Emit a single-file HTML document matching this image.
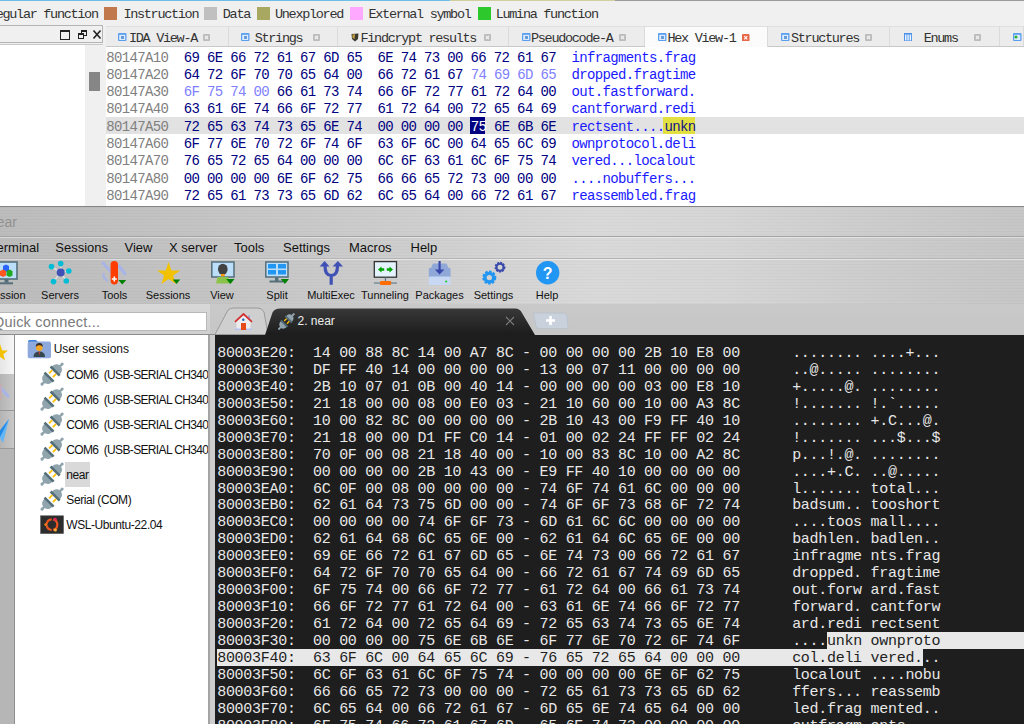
<!DOCTYPE html><html><head><meta charset="utf-8"><style>
*{margin:0;padding:0;box-sizing:border-box}
html,body{width:1024px;height:724px;overflow:hidden;background:#f0f0f0;position:relative}
.ab{position:absolute}
.mono{font-family:"Liberation Mono",monospace}
.sans{font-family:"Liberation Sans",sans-serif}
.leg{position:absolute;top:5.5px;font-family:"Liberation Mono",monospace;font-size:13.5px;letter-spacing:-1.3px;color:#333;line-height:18px;white-space:pre}
.sq{position:absolute;top:7px;width:13px;height:13px}
.tab{position:absolute;top:29px;height:20px;font-family:"Liberation Mono",monospace;font-size:13.5px;letter-spacing:-1.3px;color:#333;line-height:20px;white-space:pre}
.tx{position:absolute;top:34px;width:7px;height:7px;border:1px solid #c4c4c4;background:#d8d8d8}
.ic{position:absolute;top:33px;width:8px;height:8px;background:#a8c8f0;border:1px solid #3c78c8}
.hx{position:absolute;left:106.3px;font-family:"Liberation Mono",monospace;font-size:14px;letter-spacing:-0.65px;line-height:17.33px;white-space:pre;color:#000080}
.ad{color:#808080}.lt{color:#8080ff}.as{color:#1a1aff}
.term{position:absolute;left:217.2px;top:346px;font-family:"Liberation Mono",monospace;font-size:15px;letter-spacing:-0.29px;line-height:16.93px;white-space:pre;color:#e8e8e8}
.sel{background:#e8e8e8;color:#1e1e1e}
.menu{position:absolute;top:240px;font-family:"Liberation Sans",sans-serif;font-size:13px;color:#111;line-height:16px;white-space:pre}
.tl{position:absolute;top:289px;font-family:"Liberation Sans",sans-serif;font-size:11px;color:#111;line-height:13px;white-space:pre;text-align:center}
.ti{position:absolute;font-family:"Liberation Sans",sans-serif;font-size:12px;letter-spacing:-0.42px;color:#111;line-height:14px;white-space:pre}
</style></head><body>

<div class="ab" style="left:0;top:0;width:450px;height:1px;background:#6cbfe8"></div>
<div class="ab" style="left:450px;top:0;width:165px;height:1px;background:#cfcfa0"></div>
<div class="ab" style="left:615px;top:0;width:409px;height:1px;background:#9a9a9a"></div>
<div class="leg" style="left:-11.1px">Regular function</div>
<div class="leg" style="left:123.4px">Instruction</div>
<div class="leg" style="left:222.8px">Data</div>
<div class="leg" style="left:275px">Unexplored</div>
<div class="leg" style="left:368.5px">External symbol</div>
<div class="leg" style="left:495.7px">Lumina function</div>
<div class="sq" style="left:104px;background:#c0784c"></div>
<div class="sq" style="left:204px;background:#c0c0c0"></div>
<div class="sq" style="left:257px;background:#a8a860"></div>
<div class="sq" style="left:350.2px;background:#ffa8ff"></div>
<div class="sq" style="left:477.5px;background:#2cc82c"></div>
<div class="ab" style="left:0;top:25px;width:103px;height:18px;border:1px solid #b4b4b4;border-left:none;background:#f0f0f0"></div>
<div class="ab" style="left:0;top:44px;width:103px;height:1px;background:#c8c8c8"></div>
<div class="ab" style="left:60px;top:30px;width:10px;height:10px;border:1px solid #222;border-top:2px solid #222"></div>
<div class="ab" style="left:80.5px;top:30px;width:6px;height:6px;border:1px solid #222;border-top:2px solid #222"></div>
<div class="ab" style="left:78px;top:33px;width:6px;height:6px;border:1px solid #222;border-top:2px solid #222;background:#f0f0f0"></div>
<svg class="ab" style="left:92px;top:29px" width="10" height="11"><path d="M1.5 1.5L8.5 9.5M8.5 1.5L1.5 9.5" stroke="#222" stroke-width="1.6"/></svg>
<div class="ab" style="left:0;top:45px;width:85px;height:161px;background:#fff"></div>
<div class="ab" style="left:85px;top:45px;width:21px;height:161px;background:#f0f0f0"></div>
<div class="ab" style="left:88.6px;top:72px;width:11px;height:19px;background:#868686"></div>
<div class="ab" style="left:106px;top:46px;width:918px;height:1px;background:#c8c8c8"></div>
<div class="ab" style="left:106px;top:26px;width:123px;height:20px;background:#ececec;border-right:1px solid #dadada;border-top:1px solid #e0e0e0"></div>
<div class="ab" style="left:229px;top:26px;width:109px;height:20px;background:#ececec;border-right:1px solid #dadada;border-top:1px solid #e0e0e0"></div>
<div class="ab" style="left:338px;top:26px;width:171px;height:20px;background:#ececec;border-right:1px solid #dadada;border-top:1px solid #e0e0e0"></div>
<div class="ab" style="left:509px;top:26px;width:136px;height:20px;background:#ececec;border-right:1px solid #dadada;border-top:1px solid #e0e0e0"></div>
<div class="ab" style="left:645px;top:26px;width:123px;height:21px;background:#fbfbfb;border-right:1px solid #dadada;border-top:1px solid #e0e0e0"></div>
<div class="ab" style="left:768px;top:26px;width:122px;height:20px;background:#ececec;border-right:1px solid #dadada;border-top:1px solid #e0e0e0"></div>
<div class="ab" style="left:890px;top:26px;width:110px;height:20px;background:#ececec;border-right:1px solid #dadada;border-top:1px solid #e0e0e0"></div>
<div class="ab" style="left:1000px;top:26px;width:24px;height:20px;background:#ececec;border-right:1px solid #dadada;border-top:1px solid #e0e0e0"></div>
<div class="tab" style="left:129px">IDA View-A</div>
<svg class="ab" style="left:118px;top:33px" width="9" height="8"><rect x="0" y="0" width="8.5" height="8" rx="1" fill="#5a9ef0"/><rect x="1.2" y="1.8" width="6" height="5.2" fill="#dcecff"/><rect x="3" y="3" width="3" height="3" fill="#6a9ad8"/></svg>
<svg class="ab" style="left:203px;top:34px" width="7" height="7"><rect x="0" y="0" width="7" height="7" rx="1" fill="#bcbcbc"/><path d="M2 2L5 5M5 2L2 5" stroke="#f4f4f4" stroke-width="1.1"/></svg>
<div class="tab" style="left:254.7px">Strings</div>
<svg class="ab" style="left:241px;top:33px" width="9" height="8"><rect x="0" y="0" width="8.5" height="8" rx="1" fill="#5a9ef0"/><rect x="1.2" y="1.8" width="6" height="5.2" fill="#dcecff"/><rect x="3" y="3" width="3" height="3" fill="#6a9ad8"/></svg>
<svg class="ab" style="left:313px;top:34px" width="7" height="7"><rect x="0" y="0" width="7" height="7" rx="1" fill="#bcbcbc"/><path d="M2 2L5 5M5 2L2 5" stroke="#f4f4f4" stroke-width="1.1"/></svg>
<div class="tab" style="left:360.5px">Findcrypt results</div>
<svg class="ab" style="left:351.4px;top:32.5px" width="8" height="9"><path d="M0.5 1 L7.5 0.5 L7 6 L4 8.5 L1 6Z" fill="#3a3a30"/><path d="M1.5 1.5 L4 1.2 L3.5 6 L1.5 5Z" fill="#c8a040"/></svg>
<svg class="ab" style="left:484px;top:34px" width="7" height="7"><rect x="0" y="0" width="7" height="7" rx="1" fill="#bcbcbc"/><path d="M2 2L5 5M5 2L2 5" stroke="#f4f4f4" stroke-width="1.1"/></svg>
<div class="tab" style="left:531px">Pseudocode-A</div>
<svg class="ab" style="left:521.6px;top:33px" width="9" height="8"><rect x="0" y="0" width="8.5" height="8" rx="1" fill="#5a9ef0"/><rect x="1.2" y="1.8" width="6" height="5.2" fill="#dcecff"/><rect x="3" y="3" width="3" height="3" fill="#6a9ad8"/></svg>
<svg class="ab" style="left:619.3px;top:34px" width="7" height="7"><rect x="0" y="0" width="7" height="7" rx="1" fill="#bcbcbc"/><path d="M2 2L5 5M5 2L2 5" stroke="#f4f4f4" stroke-width="1.1"/></svg>
<div class="tab" style="left:667.5px">Hex View-1</div>
<svg class="ab" style="left:658px;top:33px" width="9" height="8"><rect x="0" y="0" width="8.5" height="8" rx="1" fill="#5a9ef0"/><rect x="1.2" y="1.8" width="6" height="5.2" fill="#dcecff"/><rect x="3" y="3" width="3" height="3" fill="#6a9ad8"/></svg>
<svg class="ab" style="left:742.4px;top:33.5px" width="7.5" height="7.5"><rect x="0" y="0" width="7.5" height="7.5" rx="1" fill="#e8684a"/><path d="M2.2 2.2L5.3 5.3M5.3 2.2L2.2 5.3" stroke="#fff" stroke-width="1.1"/></svg>
<div class="tab" style="left:791px">Structures</div>
<svg class="ab" style="left:781px;top:33px" width="9" height="8"><rect x="0" y="0" width="8.5" height="8" rx="1" fill="#5a9ef0"/><rect x="1.2" y="1.8" width="6" height="5.2" fill="#dcecff"/><rect x="3" y="3" width="3" height="3" fill="#6a9ad8"/></svg>
<svg class="ab" style="left:865px;top:34px" width="7" height="7"><rect x="0" y="0" width="7" height="7" rx="1" fill="#bcbcbc"/><path d="M2 2L5 5M5 2L2 5" stroke="#f4f4f4" stroke-width="1.1"/></svg>
<div class="tab" style="left:923.7px">Enums</div>
<svg class="ab" style="left:904px;top:33px" width="8" height="8"><rect x="0" y="0" width="8" height="8" fill="#4a90e8"/><rect x="1" y="1.5" width="1.5" height="6" fill="#e8f4ff"/><rect x="3.3" y="1.5" width="1.5" height="6" fill="#e8f4ff"/><rect x="5.6" y="1.5" width="1.5" height="6" fill="#e8f4ff"/></svg>
<svg class="ab" style="left:974.4px;top:34px" width="7" height="7"><rect x="0" y="0" width="7" height="7" rx="1" fill="#bcbcbc"/><path d="M2 2L5 5M5 2L2 5" stroke="#f4f4f4" stroke-width="1.1"/></svg>
<svg class="ab" style="left:1013px;top:33px" width="9" height="8"><rect x="0" y="0" width="8.5" height="8" rx="1" fill="#5a9ef0"/><rect x="1.2" y="1.8" width="6" height="5.2" fill="#dcecff"/><circle cx="3" cy="4" r="1.6" fill="#30b030"/></svg>
<div class="ab" style="left:106px;top:47px;width:918px;height:159px;background:#fff"></div>
<div class="ab" style="left:106px;top:117px;width:918px;height:17.4px;background:#e2e2e2"></div>
<div class="ab" style="left:470px;top:117.2px;width:15.4px;height:17px;background:#000080"></div>
<div class="ab" style="left:663.3px;top:117px;width:31.4px;height:17.2px;background:#e2e040"></div>
<div class="hx" style="top:49.5px"><span class="ad">80147A10</span>  69 6E 66 72 61 67 6D 65  6E 74 73 00 66 72 61 67  <span class="as">infragments.frag</span>
<span class="ad">80147A20</span>  64 72 6F 70 70 65 64 00  66 72 61 67 <span class="lt">74 69 6D 65</span>  <span class="as">dropped.fragtime</span>
<span class="ad">80147A30</span>  <span class="lt">6F 75 74 00</span> 66 61 73 74  66 6F 72 77 61 72 64 00  <span class="as">out.fastforward.</span>
<span class="ad">80147A40</span>  63 61 6E 74 66 6F 72 77  61 72 64 00 72 65 64 69  <span class="as">cantforward.redi</span>
<span class="ad">80147A50</span>  72 65 63 74 73 65 6E 74  00 00 00 00 <span style="color:#fff">75</span> 6E 6B 6E  <span class="as">rectsent....<span style="color:#10108a">unkn</span></span>
<span class="ad">80147A60</span>  6F 77 6E 70 72 6F 74 6F  63 6F 6C 00 64 65 6C 69  <span class="as">ownprotocol.deli</span>
<span class="ad">80147A70</span>  76 65 72 65 64 00 00 00  6C 6F 63 61 6C 6F 75 74  <span class="as">vered...localout</span>
<span class="ad">80147A80</span>  00 00 00 00 6E 6F 62 75  66 66 65 72 73 00 00 00  <span class="as">....nobuffers...</span>
<span class="ad">80147A90</span>  72 65 61 73 73 65 6D 62  6C 65 64 00 66 72 61 67  <span class="as">reassembled.frag</span></div>
<div class="ab" style="left:0;top:205.5px;width:1024px;height:1.5px;background:#858585"></div>
<div class="ab" style="left:0;top:207px;width:1024px;height:30px;background:linear-gradient(90deg,#bcbcbc 0%,#c4c4c4 20%,#cecece 40%,#d9d9d9 58%,#d6d6d6 70%,#cdcdcd 85%,#c6c6c6 100%)"></div>
<div class="ab sans" style="left:-11px;top:214px;font-size:14px;color:#939393;line-height:16px">near</div>
<div class="ab" style="left:0;top:237px;width:1024px;height:22px;background:linear-gradient(90deg,#bcbcbc 0%,#c4c4c4 20%,#cecece 40%,#d9d9d9 58%,#d6d6d6 70%,#cdcdcd 85%,#c6c6c6 100%)"></div>
<div class="menu" style="left:-10px">Terminal</div>
<div class="menu" style="left:55.3px">Sessions</div>
<div class="menu" style="left:124.5px">View</div>
<div class="menu" style="left:169px">X server</div>
<div class="menu" style="left:234px">Tools</div>
<div class="menu" style="left:283px">Settings</div>
<div class="menu" style="left:349px">Macros</div>
<div class="menu" style="left:410.5px">Help</div>
<div class="ab" style="left:0;top:259px;width:1024px;height:45px;background:linear-gradient(90deg,#bcbcbc 0%,#c4c4c4 20%,#cecece 40%,#d9d9d9 58%,#d6d6d6 70%,#cdcdcd 85%,#c6c6c6 100%)"></div>
<div class="ab" style="left:0;top:303.5px;width:1024px;height:31px;background:linear-gradient(#c9c9c9,#c6c6c6)"></div>
<div class="ab" style="left:0;top:304px;width:210px;height:30px;background:linear-gradient(#d8d8d8,#d0d0d0)"></div>
<div class="ab" style="left:0;top:207px;width:1024px;height:97px;background:repeating-linear-gradient(180deg,rgba(0,0,0,0.018) 0 1px,rgba(255,255,255,0) 1px 3px)"></div>
<div class="ab" style="left:0;top:236px;width:1024px;height:1px;background:#a4a4a4"></div>
<div class="ab" style="left:0;top:237px;width:1024px;height:1px;background:rgba(255,255,255,0.45)"></div>
<div class="ab" style="left:0;top:258px;width:1024px;height:1px;background:#b4b4b4"></div>
<div class="ab" style="left:0;top:259px;width:1024px;height:1px;background:rgba(255,255,255,0.45)"></div>
<div class="tl" style="left:-34px;width:80px">Session</div>
<div class="tl" style="left:20px;width:80px">Servers</div>
<div class="tl" style="left:74.5px;width:80px">Tools</div>
<div class="tl" style="left:128px;width:80px">Sessions</div>
<div class="tl" style="left:182px;width:80px">View</div>
<div class="tl" style="left:237px;width:80px">Split</div>
<div class="tl" style="left:291px;width:80px">MultiExec</div>
<div class="tl" style="left:345px;width:80px">Tunneling</div>
<div class="tl" style="left:399.5px;width:80px">Packages</div>
<div class="tl" style="left:453.5px;width:80px">Settings</div>
<div class="tl" style="left:507px;width:80px">Help</div>
<svg class="ab" style="left:0;top:256px" width="580" height="34" viewBox="0 256 580 34">
<g>
<rect x="-6" y="262" width="23" height="17" fill="#bbdefb" stroke="#546e7a" stroke-width="1.6"/>
<rect x="4.5" y="279" width="4" height="3.5" fill="#546e7a"/><rect x="-4" y="282.3" width="17" height="2" fill="#546e7a"/>
<path d="M3 266 L6 264.5 L9 266 L9 270.5 L6 272 L3 270.5Z" fill="#2962ff"/>
<path d="M0 271 L3 269.5 L6 271 L6 275.5 L3 277 L0 275.5Z" fill="#ff5722"/>
<path d="M6.5 271 L9.5 269.5 L12.5 271 L12.5 275.5 L9.5 277 L6.5 275.5Z" fill="#1faa1f"/>
</g>
<g stroke="#e0e0e0" stroke-width="1.4">
<line x1="60.7" y1="272.4" x2="51.5" y2="266.6"/><line x1="60.7" y1="272.4" x2="60.7" y2="263.9"/><line x1="60.7" y1="272.4" x2="68.8" y2="271"/><line x1="60.7" y1="272.4" x2="53.5" y2="281.6"/><line x1="60.7" y1="272.4" x2="66.3" y2="281"/>
</g>
<g fill="#00bcd4"><circle cx="51.5" cy="266.6" r="2.8"/><circle cx="60.7" cy="263.6" r="2.8"/><circle cx="68.8" cy="271" r="2.8"/><circle cx="53.5" cy="281.6" r="2.8"/><circle cx="66.3" cy="281" r="2.8"/></g>
<circle cx="60.7" cy="272.4" r="4" fill="#3f51b5"/>
<g>
<path d="M103 263 L114 275" stroke="#a8b4e8" stroke-width="3" stroke-linecap="round"/>
<path d="M119 266 L125 274" stroke="#a8b4e8" stroke-width="3" stroke-linecap="round"/>
<path d="M104 273 Q102 278 108 281" stroke="#a8b4e8" stroke-width="2" fill="none"/>
<rect x="110.6" y="261" width="7.4" height="23.4" rx="3.7" fill="#ff3d00"/>
<path d="M114.3 276.5 V281.5 M111.8 279 H116.8" stroke="#fff" stroke-width="1.6"/>
<path d="M118.3 280 H126.2 L122.25 284.4Z" fill="#008000"/>
</g>
<g>
<path d="M168.6 262 L171.4 270.5 L180.2 270.5 L173.1 275.6 L175.8 284 L168.6 278.9 L161.4 284 L164.1 275.6 L157 270.5 L165.8 270.5Z" fill="#f2c200"/>
<path d="M172.8 279.5 H180.2 L176.5 284Z" fill="#008000"/>
</g>
<g>
<rect x="211.8" y="262" width="22.2" height="15" fill="#bbdefb" stroke="#546e7a" stroke-width="1.5"/>
<ellipse cx="222.8" cy="269.3" rx="4.8" ry="5.6" fill="#424242"/>
<rect x="221" y="274" width="3.6" height="2.4" fill="#ff9800"/>
<path d="M216 283.5 L217.5 277 H228 L230 283.5Z" fill="#8bc34a"/>
<path d="M226.2 279 H234.5 L230.35 284Z" fill="#008000"/>
</g>
<g>
<rect x="265.8" y="262" width="22.2" height="15" fill="#bbdefb" stroke="#546e7a" stroke-width="1.5"/>
<rect x="268" y="264" width="8" height="4.5" fill="#2196f3"/><rect x="278" y="264" width="8" height="4.5" fill="#2196f3"/>
<rect x="268" y="270" width="8" height="4.5" fill="#2196f3"/><rect x="278" y="270" width="8" height="4.5" fill="#2196f3"/>
<rect x="275" y="277.5" width="3.5" height="3.5" fill="#546e7a"/><rect x="269.5" y="280.5" width="14" height="2" fill="#546e7a"/>
<path d="M280.8 279 H289 L284.9 284Z" fill="#008000"/>
</g>
<g fill="#3f51b5">
<path d="M331.2 284.8 V275.5 M325 266 Q325 275.5 331.2 275.5 Q337.5 275.5 337.5 266" stroke="#3f51b5" stroke-width="3.2" fill="none"/>
<path d="M319.7 266.6 L324.6 261 L329.5 266.6Z"/><path d="M332.6 266.6 L337.9 261 L343 266.6Z"/>
</g>
<g>
<rect x="374.3" y="261.6" width="22.2" height="15.6" fill="#e3f2fd" stroke="#333" stroke-width="1.3"/>
<path d="M378 269.5 L381.5 266.5 V268.3 H384.2 V270.7 H381.5 V272.5Z M393 269.5 L389.5 266.5 V268.3 H386.8 V270.7 H389.5 V272.5Z" fill="#00a000"/>
<rect x="384.8" y="277.5" width="1.3" height="4" fill="#607d8b"/>
<rect x="374" y="282.3" width="23" height="1.5" fill="#78909c"/>
<rect x="380" y="281" width="11.2" height="4" rx="1" fill="#ff6d00"/>
</g>
<g>
<path d="M431 268 L433 263.5 H446.5 L448.5 268Z" fill="#8fa8d8"/>
<rect x="428.8" y="268" width="21.7" height="9.2" rx="1" fill="#8fa8d8"/>
<rect x="428.8" y="276.5" width="21.7" height="8.5" rx="1.5" fill="#c8d8f4"/>
<circle cx="446.2" cy="281.5" r="1.1" fill="#22cc22"/>
<path d="M439.6 261 V271" stroke="#3949ab" stroke-width="2.2"/>
<path d="M434.8 269.5 H444.4 L439.6 274.5Z" fill="#3949ab"/>
</g>
<g>
<circle cx="489.3" cy="277.6" r="5.4" fill="none" stroke="#2196f3" stroke-width="3.2" stroke-dasharray="2.3 1.2"/>
<circle cx="489.3" cy="277.6" r="4.3" fill="none" stroke="#2196f3" stroke-width="3.2"/>
<circle cx="500" cy="267.2" r="4.1" fill="none" stroke="#3949ab" stroke-width="2.6" stroke-dasharray="1.8 0.9"/>
<circle cx="500" cy="267.2" r="3.5" fill="none" stroke="#3949ab" stroke-width="2"/>
</g>
<g>
<circle cx="547.7" cy="272.8" r="11.7" fill="#2196f3"/>
<text x="547.7" y="278.6" text-anchor="middle" font-family="Liberation Sans" font-weight="bold" font-size="16" fill="#fff">?</text>
</g>
</svg>
<div class="ab" style="left:0;top:312px;width:207px;height:19px;background:#fff;border:1px solid #b8b8b8;border-left:none"></div>
<div class="ab sans" style="left:-7px;top:313.5px;font-size:14.5px;letter-spacing:0.2px;color:#7a7a7a;line-height:16px">Quick connect...</div>
<div class="ab" style="left:0;top:334px;width:215px;height:390px;background:#c0c0c0"></div>
<div class="ab" style="left:0;top:335px;width:15px;height:389px;background:#b6b6b6;border-right:1.5px solid #8e8e8e"></div>
<div class="ab" style="left:0;top:335px;width:13.5px;height:38.5px;background:linear-gradient(90deg,#e6e6e6,#f6f6f6)"></div>
<div class="ab" style="left:0;top:373.5px;width:13.5px;height:37.5px;background:linear-gradient(90deg,#b4b4b4,#c8c8c8);border-bottom:1.5px solid #989898"></div>
<div class="ab" style="left:0;top:411px;width:13.5px;height:37.5px;background:linear-gradient(90deg,#b4b4b4,#c8c8c8);border-bottom:1.5px solid #989898"></div>
<svg class="ab" style="left:0;top:334px" width="14" height="120" viewBox="0 334 14 120"><path d="M0 344 L2.2 350.5 L8 350.5 L3.3 354.3 L5 360.6 L0 356.8Z" fill="#f2c200"/><path d="M-2 385 L8 396" stroke="#a8b4e8" stroke-width="3" stroke-linecap="round"/><rect x="-3" y="383" width="5" height="18" rx="2" fill="#d0a8a8" opacity="0.6"/><path d="M-2 433 L9 419 L3 443 L0 438Z" fill="#64b5f6"/><path d="M-2 433 L9 419 L0 437Z" fill="#1e88e5"/></svg>
<div class="ab" style="left:15px;top:335px;width:193.3px;height:389px;background:#fff"></div>
<div class="ab" style="left:208.3px;top:335px;width:1.8px;height:389px;background:#a4a4a4"></div>
<div class="ab" style="left:210px;top:335px;width:5px;height:389px;background:#cdcdcd"></div>
<div class="ab" style="left:0;top:334px;width:215px;height:1px;background:#8c8c8c"></div>
<div class="ab" style="left:65.2px;top:462.3px;width:25.2px;height:24.7px;background:#d9d9d9"></div>
<div class="ab" style="left:15px;top:335px;width:193.3px;height:389px;overflow:hidden">
<div class="ti" style="left:38.7px;top:7px;letter-spacing:0px">User sessions</div>
<div class="ti" style="left:51.3px;top:32.5px;letter-spacing:-0.65px">COM6  (USB-SERIAL CH340)</div>
<div class="ti" style="left:51.3px;top:57.5px;letter-spacing:-0.65px">COM6  (USB-SERIAL CH340)</div>
<div class="ti" style="left:51.3px;top:82.5px;letter-spacing:-0.65px">COM6  (USB-SERIAL CH340)</div>
<div class="ti" style="left:51.3px;top:107.5px;letter-spacing:-0.65px">COM6  (USB-SERIAL CH340)</div>
<div class="ti" style="left:51.3px;top:133px">near</div>
<div class="ti" style="left:51.3px;top:158px">Serial (COM)</div>
<div class="ti" style="left:51.3px;top:183px">WSL-Ubuntu-22.04</div>
</div>
<svg class="ab" style="left:0;top:330px" width="215" height="220" viewBox="0 330 215 220">
<g transform="translate(52.1,374.1) rotate(45)"><g fill="#90a4ae"><path d="M-5.6 -5.2 C-5.6 -9.8 -3 -11.6 0 -11.6 C3 -11.6 5.6 -9.8 5.6 -5.2Z"/><rect x="-1.2" y="-14.6" width="2.4" height="4"/><circle cx="0" cy="-14.3" r="1.5"/><path d="M-5.6 5.2 C-5.6 9.8 -3 11.6 0 11.6 C3 11.6 5.6 9.8 5.6 5.2Z"/><rect x="-1.2" y="10.6" width="2.4" height="4"/><circle cx="0" cy="14.3" r="1.5"/></g><rect x="-6.4" y="-5.6" width="12.8" height="2.6" fill="#546e7a"/><rect x="-6.4" y="3" width="12.8" height="2.6" fill="#546e7a"/><rect x="-3.6" y="-3" width="1.9" height="4.6" fill="#ffc107"/><rect x="1.7" y="-3" width="1.9" height="4.6" fill="#ffc107"/></g>
<g transform="translate(52.1,399.1) rotate(45)"><g fill="#90a4ae"><path d="M-5.6 -5.2 C-5.6 -9.8 -3 -11.6 0 -11.6 C3 -11.6 5.6 -9.8 5.6 -5.2Z"/><rect x="-1.2" y="-14.6" width="2.4" height="4"/><circle cx="0" cy="-14.3" r="1.5"/><path d="M-5.6 5.2 C-5.6 9.8 -3 11.6 0 11.6 C3 11.6 5.6 9.8 5.6 5.2Z"/><rect x="-1.2" y="10.6" width="2.4" height="4"/><circle cx="0" cy="14.3" r="1.5"/></g><rect x="-6.4" y="-5.6" width="12.8" height="2.6" fill="#546e7a"/><rect x="-6.4" y="3" width="12.8" height="2.6" fill="#546e7a"/><rect x="-3.6" y="-3" width="1.9" height="4.6" fill="#ffc107"/><rect x="1.7" y="-3" width="1.9" height="4.6" fill="#ffc107"/></g>
<g transform="translate(52.1,424.1) rotate(45)"><g fill="#90a4ae"><path d="M-5.6 -5.2 C-5.6 -9.8 -3 -11.6 0 -11.6 C3 -11.6 5.6 -9.8 5.6 -5.2Z"/><rect x="-1.2" y="-14.6" width="2.4" height="4"/><circle cx="0" cy="-14.3" r="1.5"/><path d="M-5.6 5.2 C-5.6 9.8 -3 11.6 0 11.6 C3 11.6 5.6 9.8 5.6 5.2Z"/><rect x="-1.2" y="10.6" width="2.4" height="4"/><circle cx="0" cy="14.3" r="1.5"/></g><rect x="-6.4" y="-5.6" width="12.8" height="2.6" fill="#546e7a"/><rect x="-6.4" y="3" width="12.8" height="2.6" fill="#546e7a"/><rect x="-3.6" y="-3" width="1.9" height="4.6" fill="#ffc107"/><rect x="1.7" y="-3" width="1.9" height="4.6" fill="#ffc107"/></g>
<g transform="translate(52.1,449.1) rotate(45)"><g fill="#90a4ae"><path d="M-5.6 -5.2 C-5.6 -9.8 -3 -11.6 0 -11.6 C3 -11.6 5.6 -9.8 5.6 -5.2Z"/><rect x="-1.2" y="-14.6" width="2.4" height="4"/><circle cx="0" cy="-14.3" r="1.5"/><path d="M-5.6 5.2 C-5.6 9.8 -3 11.6 0 11.6 C3 11.6 5.6 9.8 5.6 5.2Z"/><rect x="-1.2" y="10.6" width="2.4" height="4"/><circle cx="0" cy="14.3" r="1.5"/></g><rect x="-6.4" y="-5.6" width="12.8" height="2.6" fill="#546e7a"/><rect x="-6.4" y="3" width="12.8" height="2.6" fill="#546e7a"/><rect x="-3.6" y="-3" width="1.9" height="4.6" fill="#ffc107"/><rect x="1.7" y="-3" width="1.9" height="4.6" fill="#ffc107"/></g>
<g transform="translate(52.1,474.1) rotate(45)"><g fill="#90a4ae"><path d="M-5.6 -5.2 C-5.6 -9.8 -3 -11.6 0 -11.6 C3 -11.6 5.6 -9.8 5.6 -5.2Z"/><rect x="-1.2" y="-14.6" width="2.4" height="4"/><circle cx="0" cy="-14.3" r="1.5"/><path d="M-5.6 5.2 C-5.6 9.8 -3 11.6 0 11.6 C3 11.6 5.6 9.8 5.6 5.2Z"/><rect x="-1.2" y="10.6" width="2.4" height="4"/><circle cx="0" cy="14.3" r="1.5"/></g><rect x="-6.4" y="-5.6" width="12.8" height="2.6" fill="#546e7a"/><rect x="-6.4" y="3" width="12.8" height="2.6" fill="#546e7a"/><rect x="-3.6" y="-3" width="1.9" height="4.6" fill="#ffc107"/><rect x="1.7" y="-3" width="1.9" height="4.6" fill="#ffc107"/></g>
<g transform="translate(52.1,499.1) rotate(45)"><g fill="#90a4ae"><path d="M-5.6 -5.2 C-5.6 -9.8 -3 -11.6 0 -11.6 C3 -11.6 5.6 -9.8 5.6 -5.2Z"/><rect x="-1.2" y="-14.6" width="2.4" height="4"/><circle cx="0" cy="-14.3" r="1.5"/><path d="M-5.6 5.2 C-5.6 9.8 -3 11.6 0 11.6 C3 11.6 5.6 9.8 5.6 5.2Z"/><rect x="-1.2" y="10.6" width="2.4" height="4"/><circle cx="0" cy="14.3" r="1.5"/></g><rect x="-6.4" y="-5.6" width="12.8" height="2.6" fill="#546e7a"/><rect x="-6.4" y="3" width="12.8" height="2.6" fill="#546e7a"/><rect x="-3.6" y="-3" width="1.9" height="4.6" fill="#ffc107"/><rect x="1.7" y="-3" width="1.9" height="4.6" fill="#ffc107"/></g>
<path d="M28 341.5 Q28 340 29.5 340 H36 L38 342 H28Z" fill="#3f7fd8"/>
<rect x="27.7" y="341.6" width="23.3" height="16.6" rx="1.8" fill="#8ea9dc"/>
<path d="M33.5 357 Q33.5 351.5 39.3 351.5 Q45 351.5 45 357Z" fill="#37474f"/>
<path d="M38.6 351.8 H40 L39.3 355.5Z" fill="#e53935"/>
<ellipse cx="39.3" cy="347.6" rx="3.3" ry="3.5" fill="#f5a623"/>
<path d="M35.8 347 Q35.6 343 39.3 343 Q43 343 42.8 347 Q41.5 345 39.3 345.2 Q37 345 35.8 347Z" fill="#3a2e28"/>
<rect x="40.6" y="515.8" width="22.9" height="17.8" fill="#2d2d2d" stroke="#555" stroke-width="0.6"/>
<circle cx="52" cy="524.7" r="5.3" fill="none" stroke="#e95420" stroke-width="2.2" stroke-dasharray="7 1.5"/>
<circle cx="45.8" cy="524.5" r="1.5" fill="#f07c1c"/><circle cx="55.2" cy="519.2" r="1.5" fill="#e8235a"/><circle cx="55.4" cy="530" r="1.5" fill="#f9b233"/>
</svg>
<svg class="ab" style="left:210px;top:304px" width="814" height="31"><path d="M5 30.5 L18 6 Q20 4 24 4 L48 4 Q52 4 54 8 L58 30.5 Z" fill="#cfcfcf" stroke="#9a9a9a" stroke-width="1"/><defs><linearGradient id="tg" x1="0" y1="0" x2="0" y2="1"><stop offset="0" stop-color="#383838"/><stop offset="1" stop-color="#1c1c1c"/></linearGradient></defs><path d="M55 31 L62.5 8.5 Q64.5 4.5 70.5 4.5 L305 4.5 Q310 4.5 312 9 L325 31 Z" fill="url(#tg)"/><path d="M323.5 9 L353 9 Q356 9 357 12 L358 24 Q358 24.5 357 24.5 L330 24.5 Q327 24.5 326 22 Z" fill="#c9d1dc" stroke="#b8c0cc" stroke-width="0.8"/></svg>
<div class="ab sans" style="left:297.5px;top:312.8px;font-size:12px;color:#ececec;line-height:16px">2. near</div>
<svg class="ab" style="left:504.5px;top:316px" width="10" height="10"><path d="M1 1L9 9M9 1L1 9" stroke="#7c7c7c" stroke-width="1.1"/></svg>
<svg class="ab" style="left:545px;top:315px" width="11" height="11"><path d="M5.5 1V10M1 5.5H10" stroke="#fff" stroke-width="2.6"/></svg>
<svg class="ab" style="left:230px;top:310px" width="70" height="24" viewBox="230 310 70 24">
<rect x="235" y="328" width="17" height="2" fill="#b8c4f0"/>
<path d="M236.5 320.5 L243.5 314.5 L250.5 320.5 V328.5 H236.5Z" fill="#ececec"/>
<rect x="248" y="315.5" width="2" height="3.5" fill="#9fa8da"/>
<path d="M235 321.8 L243.5 314 L252 321.8" fill="none" stroke="#d32f2f" stroke-width="1.7"/>
<rect x="241" y="323" width="5" height="7" fill="#e64a19"/>
<circle cx="243.3" cy="319.8" r="1.2" fill="#1565c0"/>
<g transform="translate(286.4,321.5) rotate(45) scale(0.72)"><g fill="#90a4ae"><path d="M-5.6 -5.2 C-5.6 -9.8 -3 -11.6 0 -11.6 C3 -11.6 5.6 -9.8 5.6 -5.2Z"/><rect x="-1.2" y="-14.6" width="2.4" height="4"/><circle cx="0" cy="-14.3" r="1.5"/><path d="M-5.6 5.2 C-5.6 9.8 -3 11.6 0 11.6 C3 11.6 5.6 9.8 5.6 5.2Z"/><rect x="-1.2" y="10.6" width="2.4" height="4"/><circle cx="0" cy="14.3" r="1.5"/></g><rect x="-6.4" y="-5.6" width="12.8" height="2.6" fill="#546e7a"/><rect x="-6.4" y="3" width="12.8" height="2.6" fill="#546e7a"/><rect x="-3.6" y="-3" width="1.9" height="4.6" fill="#ffc107"/><rect x="1.7" y="-3" width="1.9" height="4.6" fill="#ffc107"/></g>
</svg>
<div class="ab" style="left:215px;top:334.5px;width:809px;height:390px;background:#1e1e1e"></div>
<div class="ab" style="left:827.2px;top:632.4px;width:197px;height:16.9px;background:#e8e8e8"></div>
<div class="ab" style="left:216.5px;top:649.3px;width:706.5px;height:16.9px;background:#e8e8e8"></div>
<div class="term">80003E20:  14 00 88 8C 14 00 A7 8C - 00 00 00 00 2B 10 E8 00      ........ ....+...
80003E30:  DF FF 40 14 00 00 00 00 - 13 00 07 11 00 00 00 00      ..@..... ........
80003E40:  2B 10 07 01 0B 00 40 14 - 00 00 00 00 03 00 E8 10      +.....@. ........
80003E50:  21 18 00 00 08 00 E0 03 - 21 10 60 00 10 00 A3 8C      !....... !.`.....
80003E60:  10 00 82 8C 00 00 00 00 - 2B 10 43 00 F9 FF 40 10      ........ +.C...@.
80003E70:  21 18 00 00 D1 FF C0 14 - 01 00 02 24 FF FF 02 24      !....... ...$...$
80003E80:  70 0F 00 08 21 18 40 00 - 10 00 83 8C 10 00 A2 8C      p...!.@. ........
80003E90:  00 00 00 00 2B 10 43 00 - E9 FF 40 10 00 00 00 00      ....+.C. ..@.....
80003EA0:  6C 0F 00 08 00 00 00 00 - 74 6F 74 61 6C 00 00 00      l....... total...
80003EB0:  62 61 64 73 75 6D 00 00 - 74 6F 6F 73 68 6F 72 74      badsum.. tooshort
80003EC0:  00 00 00 00 74 6F 6F 73 - 6D 61 6C 6C 00 00 00 00      ....toos mall....
80003ED0:  62 61 64 68 6C 65 6E 00 - 62 61 64 6C 65 6E 00 00      badhlen. badlen..
80003EE0:  69 6E 66 72 61 67 6D 65 - 6E 74 73 00 66 72 61 67      infragme nts.frag
80003EF0:  64 72 6F 70 70 65 64 00 - 66 72 61 67 74 69 6D 65      dropped. fragtime
80003F00:  6F 75 74 00 66 6F 72 77 - 61 72 64 00 66 61 73 74      out.forw ard.fast
80003F10:  66 6F 72 77 61 72 64 00 - 63 61 6E 74 66 6F 72 77      forward. cantforw
80003F20:  61 72 64 00 72 65 64 69 - 72 65 63 74 73 65 6E 74      ard.redi rectsent
80003F30:  00 00 00 00 75 6E 6B 6E - 6F 77 6E 70 72 6F 74 6F      ....<span style="color:#1e1e1e">unkn ownproto</span>
<span style="color:#1e1e1e">80003F40:  63 6F 6C 00 64 65 6C 69 - 76 65 72 65 64 00 00 00      col.deli vered.</span>..
80003F50:  6C 6F 63 61 6C 6F 75 74 - 00 00 00 00 6E 6F 62 75      localout ....nobu
80003F60:  66 66 65 72 73 00 00 00 - 72 65 61 73 73 65 6D 62      ffers... reassemb
80003F70:  6C 65 64 00 66 72 61 67 - 6D 65 6E 74 65 64 00 00      led.frag mented..
80003F80:  6F 75 74 66 72 61 67 6D - 65 6E 74 73 00 00 00 00      outfragm ents....</div>
</body></html>
